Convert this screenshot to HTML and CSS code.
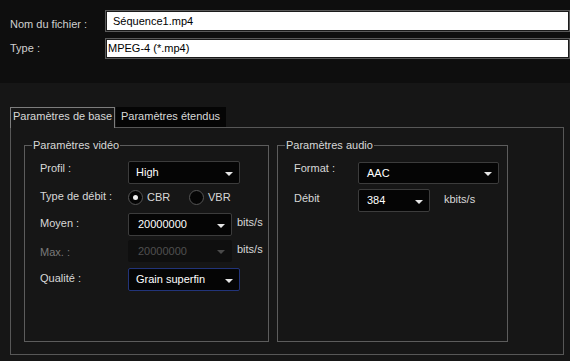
FILE: index.html
```html
<!DOCTYPE html>
<html lang="fr">
<head>
    <meta charset="UTF-8">
    <meta name="viewport" content="width=device-width, initial-scale=1.0">
    <title>Paramètres d'export</title>
    <link rel="stylesheet" href="styles.css">
</head>
<body>
    <div class="file-panel">
        <div class="file-label file-label-name">Nom du fichier :</div>
        <div class="file-input file-input-name">Séquence1.mp4</div>
        <div class="file-label file-label-type">Type :</div>
        <div class="file-input file-input-type">MPEG-4 (*.mp4)</div>
    </div>

    <div class="settings">
        <div class="tabs">
            <div class="tab tab-active">Paramètres de base</div>
            <div class="tab tab-extended">Paramètres étendus</div>
        </div>

        <div class="tab-panel">
            <fieldset class="group group-video">
                <legend>Paramètres vidéo</legend>
                <div class="form-grid video-grid">
                    <div class="field-label label-profil">Profil :</div>
                    <div class="combo combo-high"><span>High</span><span class="caret"></span></div>

                    <div class="field-label label-radio">Type de débit :</div>
                    <div class="radio-group">
                        <div class="radio"><span class="radio-mark checked"></span>CBR</div>
                        <div class="radio"><span class="radio-mark"></span>VBR</div>
                    </div>

                    <div class="field-label">Moyen :</div>
                    <div class="field">
                        <div class="combo combo-bitrate"><span>20000000</span><span class="caret"></span></div>
                        <span class="unit">bits/s</span>
                    </div>

                    <div class="field-label label-disabled">Max. :</div>
                    <div class="field">
                        <div class="combo combo-bitrate combo-disabled"><span>20000000</span><span class="caret"></span></div>
                        <span class="unit">bits/s</span>
                    </div>

                    <div class="field-label">Qualité :</div>
                    <div class="combo combo-quality"><span>Grain superfin</span><span class="caret"></span></div>
                </div>
            </fieldset>

            <fieldset class="group group-audio">
                <legend>Paramètres audio</legend>
                <div class="form-grid audio-grid">
                    <div class="field-label label-format">Format :</div>
                    <div class="combo combo-format"><span>AAC</span><span class="caret"></span></div>

                    <div class="field-label label-debit">Débit</div>
                    <div class="field">
                        <div class="combo combo-debit"><span>384</span><span class="caret"></span></div>
                        <span class="unit unit-kbits">kbits/s</span>
                    </div>
                </div>
            </fieldset>
        </div>
    </div>
</body>
</html>
```

FILE: styles.css
```css
body {
    margin: 0;
    width: 570px;
    height: 361px;
    overflow: hidden;
    background-color: #161616;
    font-family: "Liberation Sans", Arial, sans-serif;
    font-size: 11px;
    line-height: 13px;
    color: #d8d8d8;
}

/* top: file name and type */
.file-panel {
    height: 83px;
    box-sizing: border-box;
    padding: 10px 0 0 10px;
    background-color: #0e0e0e;
    display: grid;
    grid-template-columns: 95px 1fr;
    grid-template-rows: 22px 21px;
    row-gap: 6px;
    align-items: start;
}

.file-label {
    color: #d0d0d0;
    white-space: nowrap;
}

.file-label-name {
    padding-top: 8px;
}

.file-label-type {
    padding-top: 4px;
}

.file-input {
    height: 100%;
    box-sizing: border-box;
    display: flex;
    align-items: center;
    border: 1px solid #5a5a5a;
    box-shadow: inset 0 0 0 1px #1a1a1a;
    background-color: #fff;
    color: #000;
    white-space: nowrap;
}

.file-input-name {
    padding-left: 7px;
}

.file-input-type {
    padding-left: 2px;
}

/* tabs */
.settings {
    margin-top: 24px;
    margin-left: 10px;
    width: 554px;
}

.tabs {
    display: flex;
    align-items: flex-start;
    margin-bottom: -1px;
}

.tab {
    height: 20px;
    box-sizing: border-box;
    padding-top: 3px;
    white-space: nowrap;
}

.tab-active {
    position: relative;
    width: 105px;
    height: 21px;
    padding: 2px 0 0 2px;
    border: 1px solid #7d7d7d;
    border-bottom: none;
    background-color: #161616;
}

.tab-extended {
    width: 110px;
    margin-left: 1px;
    padding-left: 5px;
    background-color: #050505;
}

.tab-panel {
    height: 228px;
    box-sizing: border-box;
    border: 1px solid #575757;
    padding: 11px 0 0 13px;
    display: flex;
    gap: 8px;
}

/* group boxes */
.group {
    margin: 0;
    height: 203px;
    box-sizing: border-box;
    min-width: 0;
    padding: 9px 0 0 7px;
    border: 1px solid #5c5c5c;
}

.group legend {
    padding: 0 1px;
    line-height: 13px;
    color: #d8d8d8;
}

.group-video {
    width: 245px;
}

.group-audio {
    width: 231px;
}

.form-grid {
    display: grid;
    align-items: start;
}

.video-grid {
    padding-left: 8px;
    grid-template-columns: 88px auto;
    grid-template-rows: 23px 29px 27px 28px 23px;
}

.audio-grid {
    padding: 1px 0 0 9px;
    grid-template-columns: 64px auto;
    grid-template-rows: 27px 23px;
}

.field-label {
    padding-top: 4px;
    white-space: nowrap;
}

.label-profil {
    padding-top: 1px;
}

.label-radio {
    padding-top: 6px;
}

.label-disabled {
    padding-top: 6px;
    color: #7a7a7a;
}

.label-format {
    padding-top: 0;
}

.label-debit {
    padding-top: 3px;
}

.field {
    display: flex;
    align-items: flex-start;
}

.unit {
    margin-left: 5px;
    padding-top: 3px;
}

.unit-kbits {
    margin-left: 14px;
    padding-top: 4px;
}

/* combo boxes */
.combo {
    height: 23px;
    box-sizing: border-box;
    display: flex;
    align-items: center;
    justify-content: space-between;
    padding: 0 6px 0 7px;
    border: 1px solid #3c3c3c;
    border-radius: 2px;
    background-color: #050505;
    color: #fff;
    white-space: nowrap;
}

.caret {
    width: 0;
    height: 0;
    margin-top: 2px;
    border-left: 4px solid transparent;
    border-right: 4px solid transparent;
    border-top: 4px solid #e6e6e6;
}

.combo-high {
    width: 112px;
}

.combo-bitrate {
    width: 104px;
    padding-left: 9px;
}

.combo-disabled {
    height: 22px;
    border-color: #0f0f0f;
    background-color: #0f0f0f;
    color: #505050;
}

.combo-disabled .caret {
    border-top-color: #4a4a4a;
}

.combo-quality {
    width: 112px;
    border-color: #22347a;
}

.combo-format {
    width: 141px;
    height: 22px;
    padding-left: 8px;
}

.combo-debit {
    width: 72px;
    padding-left: 8px;
}

/* radio buttons */
.radio-group {
    display: flex;
    padding-top: 6px;
}

.radio {
    width: 61px;
    display: flex;
    align-items: center;
    gap: 4px;
}

.radio-mark {
    width: 15px;
    height: 15px;
    box-sizing: border-box;
    border: 1px solid #555;
    border-radius: 50%;
    background-color: #050505;
    display: flex;
    align-items: center;
    justify-content: center;
}

.radio-mark.checked::after {
    content: "";
    width: 5px;
    height: 5px;
    border-radius: 50%;
    background-color: #f0f0f0;
}
```
